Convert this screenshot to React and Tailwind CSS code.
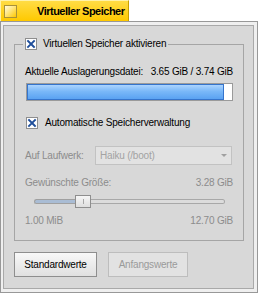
function CheckX() {
  return (
    <span className="w-[12px] h-[12px] border border-[#8e8e8e] bg-white flex items-center justify-center shrink-0">
      <svg width="10" height="10" viewBox="0 0 10 10">
        <path d="M2 2 L8 8 M8 2 L2 8" stroke="#1f4e9a" strokeWidth="1.9" strokeLinecap="square" />
      </svg>
    </span>
  );
}

export default function App() {
  return (
    <div className="w-[258px] h-[293px] bg-white flex flex-col font-['Liberation_Sans',Arial,sans-serif] text-[10px] leading-[12px] tracking-[-0.2px] text-black">
      <div className="h-[21px] self-start shrink-0 bg-[linear-gradient(#ffdc45,#ffc900)] border-l border-t border-r border-l-[#fff2a8] border-t-[#fff2a8] border-r-[#c8a000] flex items-center pr-[3px]">
        <span className="ml-[3px] w-[13px] h-[13px] shrink-0 border border-[#a8913a] bg-[linear-gradient(135deg,#fffbe0,#ffe680_45%,#ffc800)]" />
        <span className="ml-[20px] whitespace-nowrap font-bold text-[11px] tracking-[-0.5px]">Virtueller Speicher</span>
      </div>
      <div className="flex-1 flex border border-[#989898] bg-[#efefef] pt-[3px] pr-[3px] pb-[3px] pl-[2px]">
        <div className="flex-1 flex flex-col border border-[#a9a9a9] bg-[#d8d8d8] pl-[10px] pr-[9px] pt-[12px]">
          <fieldset className="border border-[#a5a5a5] px-[10px] pt-[16px] pb-[13px] flex flex-col">
            <legend className="ml-[-2px] px-[2px] h-[12px] flex items-center gap-[6px]">
              <CheckX />
              <span>Virtuellen Speicher aktivieren</span>
            </legend>
            <div className="h-[12px] flex justify-between">
              <span>Aktuelle Auslagerungsdatei:</span>
              <span>3.65 GiB / 3.74 GiB</span>
            </div>
            <div className="mt-[5px] ml-[1px] h-[18px] border border-[#9a9a9a] bg-white flex">
              <div className="w-[197px] h-full border border-[#3574cc] bg-[linear-gradient(#acd4ff,#7ab8f8_45%,#5aa2f2)]" />
            </div>
            <div className="mt-[16px] ml-[1px] h-[12px] flex items-center gap-[7px]">
              <CheckX />
              <span>Automatische Speicherverwaltung</span>
            </div>
            <div className="mt-[17px] flex items-center text-[#8c8c8c]">
              <span>Auf Laufwerk:</span>
              <div className="ml-auto mr-[1px] w-[137px] h-[19px] border border-[#c2c2c2] bg-[#e2e2e2] flex items-center pl-[4px] pr-[4px]">
                <span className="flex-1 text-[#a3a3a3]">Haiku (/boot)</span>
                <svg width="6" height="4" viewBox="0 0 6 4">
                  <path d="M0 0 L6 0 L3 3 Z" fill="#a0a0a0" />
                </svg>
              </div>
            </div>
            <div className="mt-[12px] h-[12px] flex justify-between text-[#8c8c8c]">
              <span>Gewünschte Größe:</span>
              <span>3.28 GiB</span>
            </div>
            <div className="mt-[6px] h-[13px] ml-[9px] mr-[8px] flex items-center">
              <div className="w-[41px] h-[5px] rounded-l-full border border-r-0 border-[#a0a0a0] bg-[#a9bcd4]" />
              <div className="w-[16px] h-[13px] border border-[#8e8e8e] bg-[linear-gradient(#f6f6f6,#dedede)] flex items-center justify-center shrink-0">
                <span className="w-px h-[5px] bg-[#a8a8a8]" />
              </div>
              <div className="flex-1 h-[5px] rounded-r-full border border-l-0 border-[#a8a8a8] bg-[#dcdcdc]" />
            </div>
            <div className="mt-[7px] h-[12px] flex justify-between text-[#8c8c8c]">
              <span>1.00 MiB</span>
              <span>12.70 GiB</span>
            </div>
          </fieldset>
          <div className="mt-[11px] flex gap-[11px]">
            <button className="w-[83px] h-[25px] border border-[#8e8e8e] bg-[linear-gradient(#f8f8f8,#e0e0e0)] text-black">Standardwerte</button>
            <button className="w-[80px] h-[25px] border border-[#bdbdbd] bg-[#e2e2e2] text-[#9a9a9a]">Anfangswerte</button>
          </div>
        </div>
      </div>
    </div>
  );
}
